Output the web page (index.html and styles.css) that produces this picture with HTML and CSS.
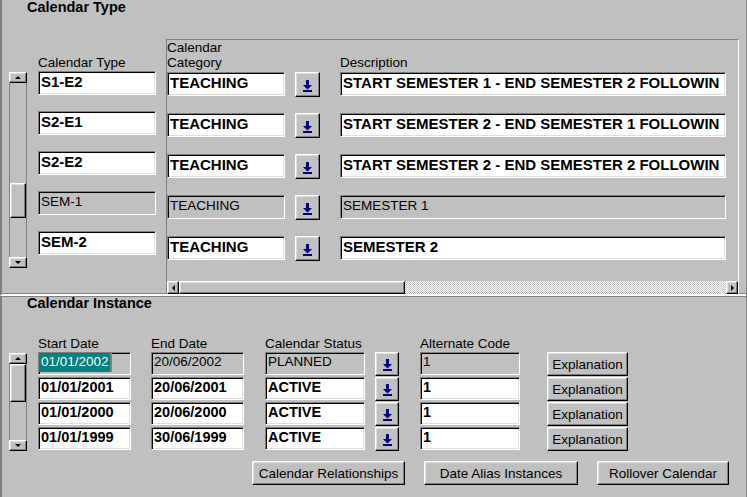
FILE: index.html
```html
<!DOCTYPE html>
<html lang="en">
<head>
    <meta charset="UTF-8">
    <title>Calendar Types</title>
    <link rel="stylesheet" href="styles.css">
</head>
<body>
    <div class="window">
        <!-- Calendar Type block -->
        <section class="block block-type">
            <h2 class="block-title">Calendar Type</h2>
            <div class="type-body">
                <div class="vscroll vscroll-type">
                    <div class="sb-btn sb-up"></div>
                    <div class="sb-track"><div class="sb-thumb"></div></div>
                    <div class="sb-btn sb-down"></div>
                </div>

                <div class="type-col">
                    <div class="label">Calendar Type</div>
                    <div class="field">S1-E2</div>
                    <div class="field">S2-E1</div>
                    <div class="field">S2-E2</div>
                    <div class="field off">SEM-1</div>
                    <div class="field">SEM-2</div>
                </div>

                <div class="canvas">
                    <div class="canvas-head">
                        <div class="label c-cat">Calendar<br>Category</div>
                        <div class="label c-desc">Description</div>
                    </div>
                    <div class="canvas-rows">
                        <div class="canvas-row">
                            <div class="field c-cat">TEACHING</div>
                            <div class="lov c-lov-top"><svg width="9" height="12" viewBox="0 0 9 12"><path d="M3 0h3v5h3l-4.5 4.5L0 5h3z" fill="#000080"/><rect y="10" width="9" height="2" fill="#000080"/></svg></div>
                            <div class="field c-desc">START SEMESTER 1 - END SEMESTER 2 FOLLOWIN</div>
                        </div>
                        <div class="canvas-row">
                            <div class="field c-cat">TEACHING</div>
                            <div class="lov c-lov-top"><svg width="9" height="12" viewBox="0 0 9 12"><path d="M3 0h3v5h3l-4.5 4.5L0 5h3z" fill="#000080"/><rect y="10" width="9" height="2" fill="#000080"/></svg></div>
                            <div class="field c-desc">START SEMESTER 2 - END SEMESTER 1 FOLLOWIN</div>
                        </div>
                        <div class="canvas-row">
                            <div class="field c-cat">TEACHING</div>
                            <div class="lov c-lov-top"><svg width="9" height="12" viewBox="0 0 9 12"><path d="M3 0h3v5h3l-4.5 4.5L0 5h3z" fill="#000080"/><rect y="10" width="9" height="2" fill="#000080"/></svg></div>
                            <div class="field c-desc">START SEMESTER 2 - END SEMESTER 2 FOLLOWIN</div>
                        </div>
                        <div class="canvas-row">
                            <div class="field off c-cat">TEACHING</div>
                            <div class="lov c-lov-top"><svg width="9" height="12" viewBox="0 0 9 12"><path d="M3 0h3v5h3l-4.5 4.5L0 5h3z" fill="#000080"/><rect y="10" width="9" height="2" fill="#000080"/></svg></div>
                            <div class="field off c-desc">SEMESTER 1</div>
                        </div>
                        <div class="canvas-row">
                            <div class="field c-cat">TEACHING</div>
                            <div class="lov c-lov-top"><svg width="9" height="12" viewBox="0 0 9 12"><path d="M3 0h3v5h3l-4.5 4.5L0 5h3z" fill="#000080"/><rect y="10" width="9" height="2" fill="#000080"/></svg></div>
                            <div class="field c-desc">SEMESTER 2</div>
                        </div>
                    </div>
                    <div class="hscroll">
                        <div class="sb-btn sb-left"></div>
                        <div class="hs-thumb"></div>
                        <div class="hs-track"></div>
                        <div class="sb-btn sb-right"></div>
                    </div>
                </div>
            </div>
        </section>

        <!-- Calendar Instance block -->
        <section class="block block-inst">
            <h2 class="block-title">Calendar Instance</h2>
            <div class="inst-body">
                <div class="vscroll vscroll-inst">
                    <div class="sb-btn sb-up"></div>
                    <div class="sb-track"><div class="sb-thumb"></div></div>
                    <div class="sb-btn sb-down"></div>
                </div>

                <div class="inst-table">
                    <div class="inst-head">
                        <div class="label c-start">Start Date</div>
                        <div class="label c-end">End Date</div>
                        <div class="label c-status">Calendar Status</div>
                        <div class="label c-alt">Alternate Code</div>
                    </div>
                    <div class="inst-row">
                        <div class="field off focus c-start"><span class="sel">01/01/2002</span></div>
                        <div class="field off c-end">20/06/2002</div>
                        <div class="field off c-status">PLANNED</div>
                        <div class="lov c-lov"><svg width="9" height="12" viewBox="0 0 9 12"><path d="M3 0h3v5h3l-4.5 4.5L0 5h3z" fill="#000080"/><rect y="10" width="9" height="2" fill="#000080"/></svg></div>
                        <div class="field off c-alt">1</div>
                        <button class="btn c-expl">Explanation</button>
                    </div>
                    <div class="inst-row">
                        <div class="field c-start">01/01/2001</div>
                        <div class="field c-end">20/06/2001</div>
                        <div class="field c-status">ACTIVE</div>
                        <div class="lov c-lov"><svg width="9" height="12" viewBox="0 0 9 12"><path d="M3 0h3v5h3l-4.5 4.5L0 5h3z" fill="#000080"/><rect y="10" width="9" height="2" fill="#000080"/></svg></div>
                        <div class="field c-alt">1</div>
                        <button class="btn c-expl">Explanation</button>
                    </div>
                    <div class="inst-row">
                        <div class="field c-start">01/01/2000</div>
                        <div class="field c-end">20/06/2000</div>
                        <div class="field c-status">ACTIVE</div>
                        <div class="lov c-lov"><svg width="9" height="12" viewBox="0 0 9 12"><path d="M3 0h3v5h3l-4.5 4.5L0 5h3z" fill="#000080"/><rect y="10" width="9" height="2" fill="#000080"/></svg></div>
                        <div class="field c-alt">1</div>
                        <button class="btn c-expl">Explanation</button>
                    </div>
                    <div class="inst-row">
                        <div class="field c-start">01/01/1999</div>
                        <div class="field c-end">30/06/1999</div>
                        <div class="field c-status">ACTIVE</div>
                        <div class="lov c-lov"><svg width="9" height="12" viewBox="0 0 9 12"><path d="M3 0h3v5h3l-4.5 4.5L0 5h3z" fill="#000080"/><rect y="10" width="9" height="2" fill="#000080"/></svg></div>
                        <div class="field c-alt">1</div>
                        <button class="btn c-expl">Explanation</button>
                    </div>
                </div>
            </div>

            <div class="actions">
                <button class="btn btn-rel">Calendar Relationships</button>
                <button class="btn btn-alias">Date Alias Instances</button>
                <button class="btn btn-roll">Rollover Calendar</button>
            </div>
        </section>
    </div>
</body>
</html>
```

FILE: styles.css
```css
* {
    margin: 0;
    padding: 0;
    box-sizing: border-box;
}

body {
    background: #c0c0c0;
    color: #000;
    font-family: "Liberation Sans", Arial, sans-serif;
    font-size: 13.5px;
    width: 747px;
    height: 497px;
    overflow: hidden;
}

.window {
    height: 497px;
    border-right: 1px solid #808080;
}

/* blocks */
.block {
    border-left: 2px solid #808080;
    padding-left: 7px;
}

.block-type {
    height: 296px;
    border-bottom: 2px solid #fff;
    box-shadow: inset 0 -1px 0 #808080;
}

.block-inst {
    height: 201px;
    border-top: 1px solid #808080;
}

.block-title {
    font-size: 14.5px;
    font-weight: bold;
    line-height: 14px;
    padding-left: 18px;
}

.block-type .block-title {
    margin-bottom: 25px;
}

.block-inst .block-title {
    margin-top: -1px;
}

.label {
    line-height: 15px;
    white-space: nowrap;
}

/* text items */
.field {
    height: 24px;
    background: #fff;
    border: 1px solid;
    border-color: #808080 #fff #fff #808080;
    box-shadow: inset 1px 1px 0 #000, inset -1px -1px 0 #dfdfdf;
    padding: 2px 0 0 2px;
    font-size: 15px;
    font-weight: bold;
    line-height: 16px;
    white-space: nowrap;
    overflow: hidden;
}

.field.off {
    background: #c0c0c0;
    font-size: 13.5px;
    font-weight: normal;
    box-shadow: inset 1px 1px 0 #000;
}

.field.focus {
    padding-left: 0;
}

.sel {
    display: inline-block;
    height: 19px;
    margin-top: -1px;
    padding: 1px 1px 0 2px;
    background: #008080;
    color: #fff;
    border-right: 2px solid #808080;
}

/* buttons */
.lov,
.btn,
.sb-btn,
.sb-thumb,
.hs-thumb {
    background: #c0c0c0;
    border: 1px solid;
    border-color: #fff #000 #000 #fff;
    box-shadow: inset -1px -1px 0 #808080, inset 1px 1px 0 #dfdfdf;
}

.lov {
    display: flex;
    align-items: center;
    justify-content: center;
    padding-top: 2px;
}

.btn {
    height: 24px;
    font-family: inherit;
    font-size: 13.5px;
    color: #000;
    white-space: nowrap;
}

/* scrollbars */
.vscroll {
    width: 18px;
    display: flex;
    flex-direction: column;
}

.sb-btn {
    display: flex;
    align-items: center;
    justify-content: center;
}

.sb-btn::before {
    content: "";
    border-style: solid;
    border-color: transparent;
}

.vscroll .sb-btn {
    height: 11px;
}

.sb-up::before {
    border-width: 0 3px 3px;
    border-bottom-color: #000;
}

.sb-down::before {
    border-width: 3px 3px 0;
    border-top-color: #000;
}

.sb-left::before {
    border-width: 3px 3px 3px 0;
    border-right-color: #000;
}

.sb-right::before {
    border-width: 3px 0 3px 3px;
    border-left-color: #000;
}

.sb-track {
    flex: 1;
    border-left: 1px solid #808080;
    border-right: 1px solid #808080;
}

.vscroll-type {
    height: 196px;
    margin-top: 33px;
}

.vscroll-type .sb-thumb {
    height: 35px;
    margin-top: 100px;
}

.vscroll-inst {
    height: 98px;
    margin-top: 17px;
}

.vscroll-inst .sb-thumb {
    height: 38px;
}

.hscroll {
    height: 13px;
    display: flex;
    margin-top: auto;
}

.hscroll .sb-btn {
    width: 12px;
}

.hs-thumb {
    width: 226px;
}

.hs-track {
    flex: 1;
    background: repeating-conic-gradient(#fff 0 25%, #c0c0c0 0 50%) 0 0 / 2px 2px;
}

/* calendar type */
.type-body {
    display: flex;
    align-items: flex-start;
}

.type-col {
    width: 118px;
    margin-left: 11px;
    margin-top: 16px;
    display: flex;
    flex-direction: column;
    gap: 16px;
}

.type-col .label {
    margin-bottom: -15px;
}

.canvas {
    width: 573px;
    height: 255px;
    margin-left: 10px;
    border-top: 1px solid #808080;
    border-left: 1px solid #808080;
    border-right: 1px solid #fff;
    display: flex;
    flex-direction: column;
}

.canvas-head {
    height: 32px;
    display: flex;
    align-items: flex-end;
    padding-bottom: 2px;
}

.canvas-rows {
    display: flex;
    flex-direction: column;
    gap: 16px;
}

.canvas-row {
    display: flex;
}

.c-cat {
    width: 118px;
}

.c-lov-top {
    width: 25px;
    height: 25px;
    margin-left: 10px;
}

.c-desc {
    width: 386px;
    margin-left: 20px;
}

.canvas-head .c-desc {
    margin-left: 55px;
}

/* calendar instance */
.inst-body {
    display: flex;
    align-items: flex-start;
    margin-top: 26px;
}

.inst-table {
    margin-left: 11px;
}

.inst-head {
    display: flex;
    margin-bottom: 1px;
}

.inst-head .c-alt {
    margin-left: 55px;
}

.inst-row {
    display: flex;
    height: 25px;
    align-items: flex-start;
}

.inst-row .field {
    height: 23px;
    padding-top: 1px;
    font-size: 14.5px;
}

.inst-row .field.off {
    font-size: 13.5px;
}

.c-start { width: 93px; }
.c-end { width: 93px; margin-left: 20px; }
.c-status { width: 100px; margin-left: 21px; }
.c-lov { width: 24px; height: 24px; margin-left: 10px; }
.c-alt { width: 100px; margin-left: 21px; }
.c-expl { width: 81px; margin-left: 27px; }

.actions {
    display: flex;
    gap: 19px;
    margin-top: 9px;
    padding-left: 243px;
}

.btn-rel { width: 153px; }
.btn-alias { width: 154px; }
.btn-roll { width: 132px; }
```
